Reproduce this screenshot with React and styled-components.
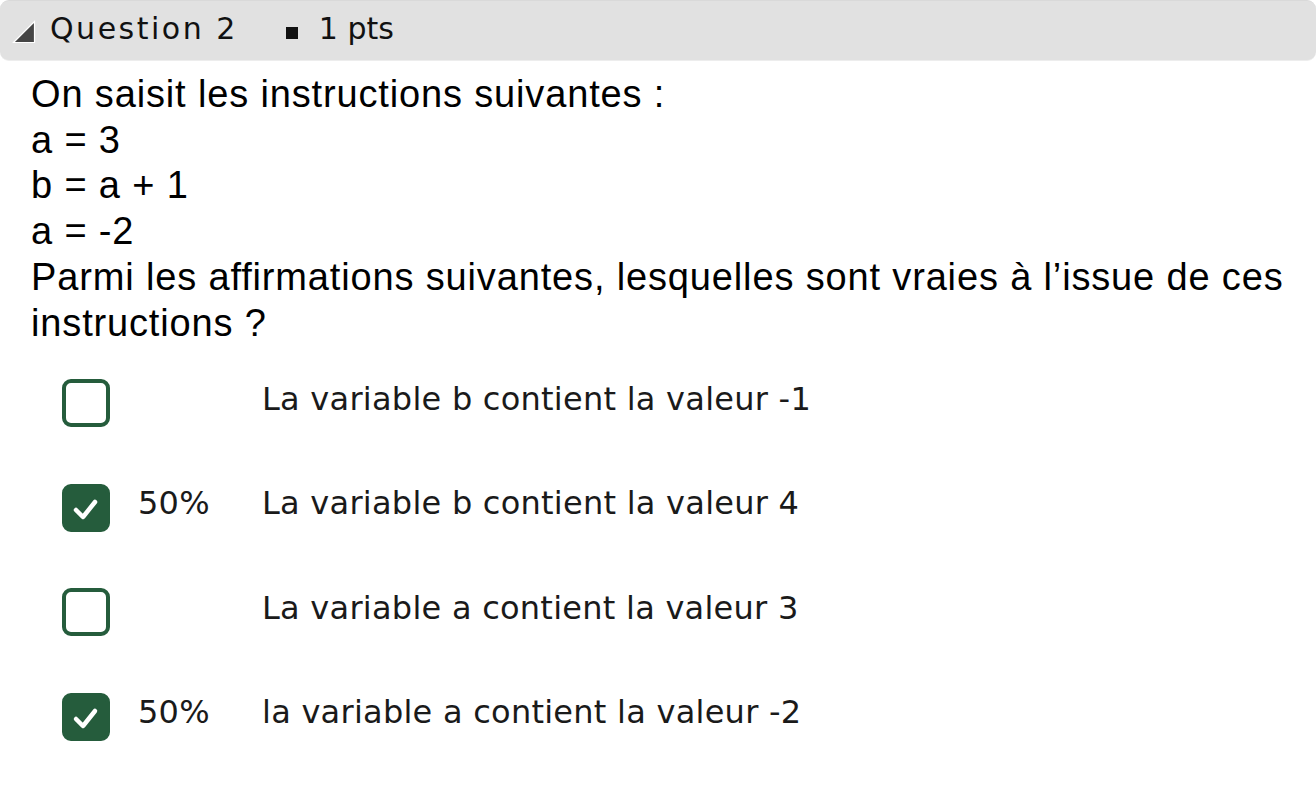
import React from "react";
import styled, { createGlobalStyle } from "styled-components";

const Global = createGlobalStyle`
  html, body { margin: 0; padding: 0; background: #ffffff; }
  body { width: 1316px; height: 796px; overflow: hidden; }
`;

const Page = styled.div`
  width: 1316px;
  display: flex;
  flex-direction: column;
`;

const Header = styled.div`
  height: 61px;
  background: #e1e1e1;
  border-top: 1px solid #d9d9d9;
  border-bottom: 1px solid #ededed;
  box-sizing: border-box;
  border-radius: 9px;
  display: flex;
  align-items: center;
  padding-left: 12px;
  font-family: "DejaVu Sans", "Open Sans", sans-serif;
  color: #111;
`;

const Toggle = styled.svg`
  width: 24px;
  height: 24px;
  margin-top: 3px;
  margin-right: 14px;
  flex: none;
`;

const Title = styled.span`
  font-size: 30px;
  letter-spacing: 2.5px;
  padding-bottom: 5px;
`;

const Bullet = styled.span`
  width: 12px;
  height: 12px;
  background: #111;
  margin-left: 48px;
  margin-right: 21px;
  margin-top: 4px;
`;

const Points = styled.span`
  font-size: 30px;
  padding-bottom: 5px;
`;

const Statement = styled.div`
  margin-top: 11px;
  padding-left: 31px;
  font-family: "Liberation Sans", Arial, sans-serif;
  font-size: 38px;
  line-height: 45.7px;
  letter-spacing: 0.85px;
  color: #000;
`;

const Options = styled.div`
  margin-top: 33px;
  padding-left: 62px;
  display: flex;
  flex-direction: column;
  gap: 56.5px;
`;

const Row = styled.div`
  display: flex;
  align-items: center;
  height: 48px;
  font-family: "DejaVu Sans", "Open Sans", sans-serif;
  font-size: 32px;
  letter-spacing: 0.25px;
  color: #1a1a1a;
`;

const Box = styled.div`
  width: 48px;
  height: 48px;
  box-sizing: border-box;
  border-radius: 9px;
  border: 4px solid #255c3c;
  background: ${(p) => (p.$checked ? "#255c3c" : "#ffffff")};
  display: flex;
  align-items: center;
  justify-content: center;
  flex: none;
`;

const Percent = styled.span`
  width: 124px;
  margin-left: 28px;
  padding-bottom: 9px;
  flex: none;
`;

const Label = styled.span`
  padding-bottom: 9px;
`;

const options = [
  { label: "La variable b contient la valeur -1", checked: false },
  { label: "La variable b contient la valeur 4", checked: true, pct: "50%" },
  { label: "La variable a contient la valeur 3", checked: false },
  { label: "la variable a contient la valeur -2", checked: true, pct: "50%" },
];

export default function App() {
  return (
    <Page>
      <Global />
      <Header>
        <Toggle viewBox="0 0 24 24">
          <polygon points="22.5,1.5 22.5,22.5 1.5,22.5" fill="#454545" stroke="#ffffff" strokeWidth="1.2" />
        </Toggle>
        <Title>Question 2</Title>
        <Bullet />
        <Points>1 pts</Points>
      </Header>
      <Statement>
        On saisit les instructions suivantes :<br />
        a = 3<br />
        b = a + 1<br />
        a = -2<br />
        Parmi les affirmations suivantes, lesquelles sont vraies à l’issue de ces instructions ?
      </Statement>
      <Options>
        {options.map((o, i) => (
          <Row key={i}>
            <Box $checked={o.checked}>
              {o.checked && (
                <svg width="48" height="48" viewBox="0 0 48 48" style={{ margin: -4 }}>
                  <polyline points="14,26 21,33 33,18" fill="none" stroke="#fff" strokeWidth="4.5" strokeLinecap="round" strokeLinejoin="round" />
                </svg>
              )}
            </Box>
            <Percent>{o.pct || ""}</Percent>
            <Label>{o.label}</Label>
          </Row>
        ))}
      </Options>
    </Page>
  );
}
